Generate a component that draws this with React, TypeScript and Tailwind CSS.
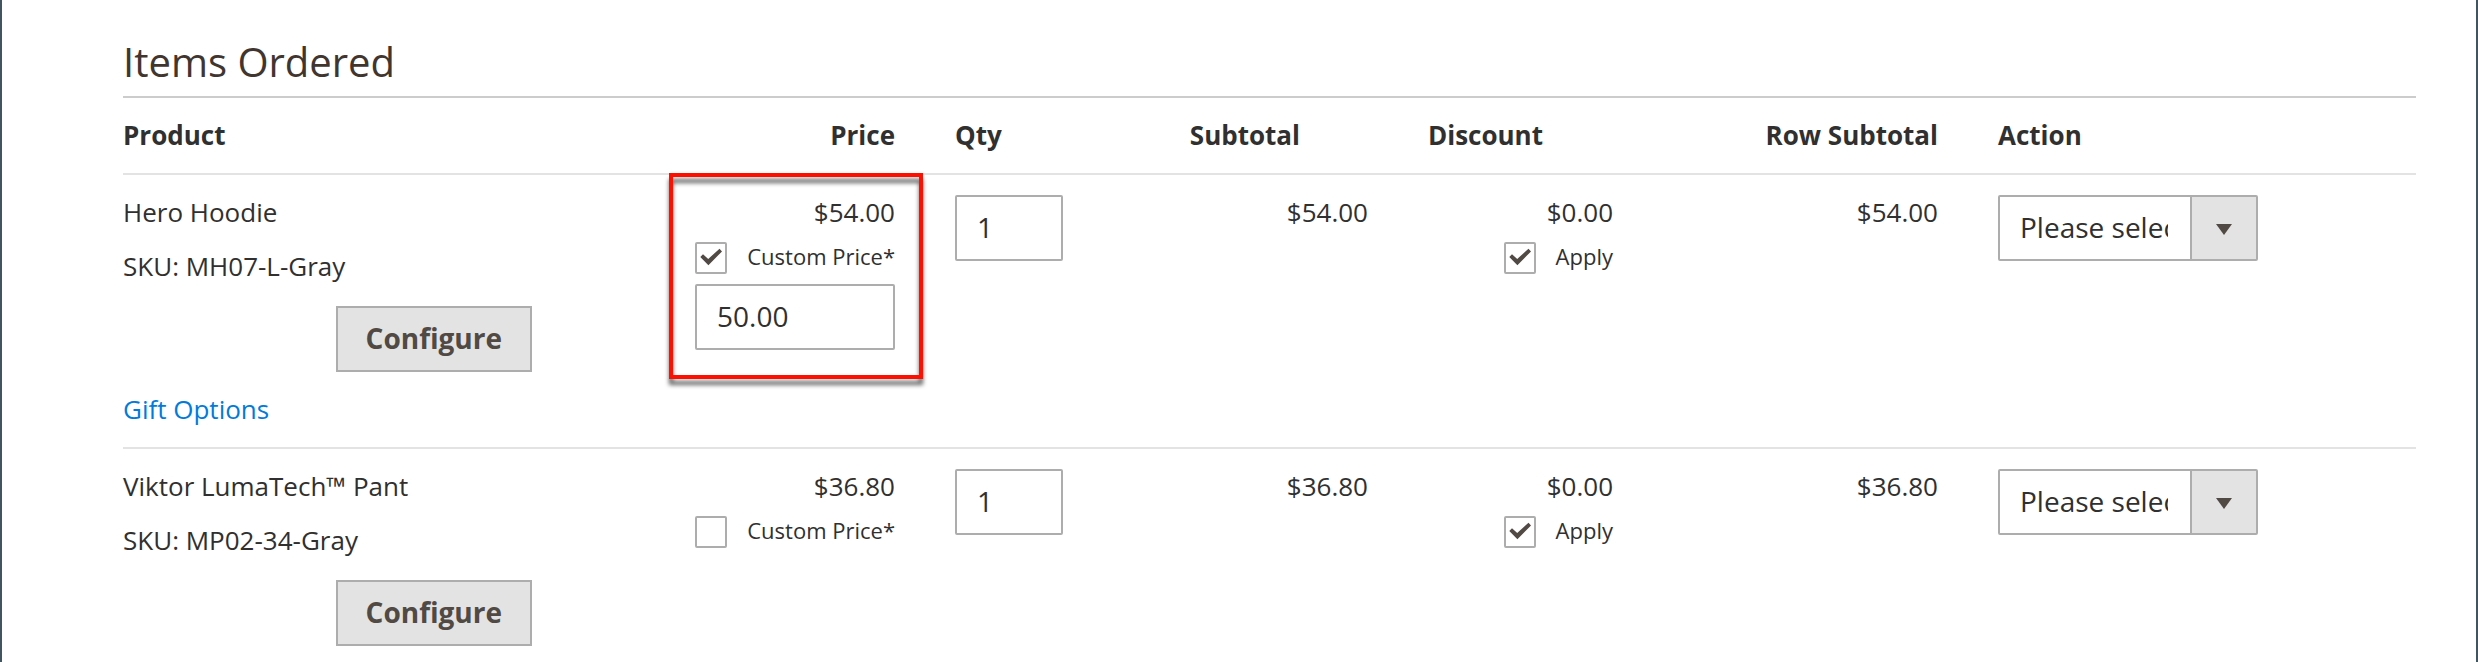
type Item = {
  id: string;
  name: string;
  sku: string;
  price: string;
  customPrice?: string;
  gift?: boolean;
};

const items: Item[] = [
  { id: "mh07", name: "Hero Hoodie", sku: "MH07-L-Gray", price: "$54.00", customPrice: "50.00", gift: true },
  { id: "mp02", name: "Viktor LumaTech™ Pant", sku: "MP02-34-Gray", price: "$36.80" },
];

function CheckField({ id, label, checked }: { id: string; label: string; checked: boolean }) {
  return (
    <div className="mt-[13px] flex justify-end gap-5">
      <span className="relative size-8 shrink-0">
        <input
          id={id}
          type="checkbox"
          defaultChecked={checked}
          className="peer block size-8 appearance-none rounded-[2px] border-2 border-[#adadad] bg-white"
        />
        <svg
          viewBox="0 0 32 32"
          className="pointer-events-none absolute inset-0 hidden size-8 peer-checked:block"
          aria-hidden="true"
        >
          <path d="M5.3 15 8 12.2 13.2 17 24.5 6.7 27 9.4 13.4 23.2Z" fill="#514943" />
        </svg>
      </span>
      <label htmlFor={id} className="text-[22px] leading-7 whitespace-nowrap">
        {label}
      </label>
    </div>
  );
}

function TextBox({ label, value }: { label: string; value: string }) {
  return (
    <input
      type="text"
      aria-label={label}
      defaultValue={value}
      className="block h-[66px] w-full rounded-[2px] border-2 border-[#adadad] bg-white px-5 pb-0.5 text-[28px]"
    />
  );
}

function ItemRow({ item }: { item: Item }) {
  const custom = item.customPrice !== undefined;
  return (
    <tr className="group align-top [&>td]:border-b-2 [&>td]:border-[#e3e3e3] last:[&>td]:border-b-0">
      <td className="pt-5 pb-[21px] group-last:pb-4">
        <div>{item.name}</div>
        <div className="mt-5">SKU: {item.sku}</div>
        <div className="mt-[23px] mr-[133px] flex justify-end">
          <button
            type="button"
            className="h-[66px] border-2 border-[#adadad] bg-[#e3e3e3] px-7 pb-0.5 text-[28px] font-bold text-[#514943]"
          >
            Configure
          </button>
        </div>
        {item.gift && (
          <a href="#gift-options" className="mt-5 block text-[#007bdb]">
            Gift Options
          </a>
        )}
      </td>
      <td className="relative px-[30px] pt-5 text-right">
        <div>{item.price}</div>
        <CheckField id={`custom-${item.id}`} label="Custom Price*" checked={custom} />
        {custom && (
          <>
            <div className="mt-[10px]">
              <TextBox label="Custom price amount" value={item.customPrice ?? ""} />
            </div>
            <div className="pointer-events-none absolute -top-0.5 right-0.5 left-1 h-[206px] border-4 border-[#ff0f00] drop-shadow-[0_6px_2px_rgba(0,0,0,0.6)]" />
          </>
        )}
      </td>
      <td className="px-[30px] pt-5">
        <TextBox label="Quantity" value="1" />
      </td>
      <td className="px-[30px] pt-5 text-right">{item.price}</td>
      <td className="px-[30px] pt-5 text-right">
        <div>$0.00</div>
        <CheckField id={`apply-${item.id}`} label="Apply" checked />
      </td>
      <td className="px-[30px] pt-5 text-right">{item.price}</td>
      <td className="px-[30px] pt-5">
        <div className="relative w-[260px]">
          <select
            aria-label="Action"
            className="block h-[66px] w-full appearance-none rounded-[2px] border-2 border-[#adadad] bg-white pr-[88px] pb-0.5 pl-5 text-[28px]"
          >
            <option>Please select</option>
            <option>Remove</option>
            <option>Move to Shopping Cart</option>
            <option>Move to Wish List</option>
          </select>
          <span className="pointer-events-none absolute inset-y-0.5 right-0.5 flex w-[66px] items-center justify-center border-l-2 border-[#adadad] bg-[#e3e3e3]">
            <svg viewBox="0 0 16 11" className="mt-0.5 h-[11px] w-4" aria-hidden="true">
              <path d="M0 0H16L8 11Z" fill="#514943" />
            </svg>
          </span>
        </div>
      </td>
    </tr>
  );
}

export default function App() {
  return (
    <main className="min-h-screen overflow-hidden border-x-2 border-[#41545f] bg-white pt-[38px] pr-[60px] pl-[121px] font-['Open_Sans','Noto_Sans',sans-serif] text-[26px] leading-[34px] text-[#303030]">
      <h2 className="border-b-2 border-[#cccccc] pb-[10px] text-[40px] leading-[48px] text-[#41362f]">
        Items Ordered
      </h2>
      <table className="w-full table-fixed border-separate border-spacing-0">
        <colgroup>
          <col className="w-[542px]" />
          <col className="w-[260px]" />
          <col className="w-[168px]" />
          <col className="w-[305px]" />
          <col className="w-[245px]" />
          <col className="w-[325px]" />
          <col className="w-[448px]" />
        </colgroup>
        <thead>
          <tr className="whitespace-nowrap [&>th]:border-b-2 [&>th]:border-[#e3e3e3] [&>th]:pt-5 [&>th]:pb-[21px]">
            <th className="text-left">Product</th>
            <th className="px-[30px] text-right">Price</th>
            <th className="px-[30px] text-left">Qty</th>
            <th className="pr-[98px] text-right">Subtotal</th>
            <th className="pr-[100px] text-right">Discount</th>
            <th className="px-[30px] text-right">Row Subtotal</th>
            <th className="px-[30px] text-left">Action</th>
          </tr>
        </thead>
        <tbody>
          {items.map((item) => (
            <ItemRow key={item.id} item={item} />
          ))}
        </tbody>
      </table>
    </main>
  );
}
